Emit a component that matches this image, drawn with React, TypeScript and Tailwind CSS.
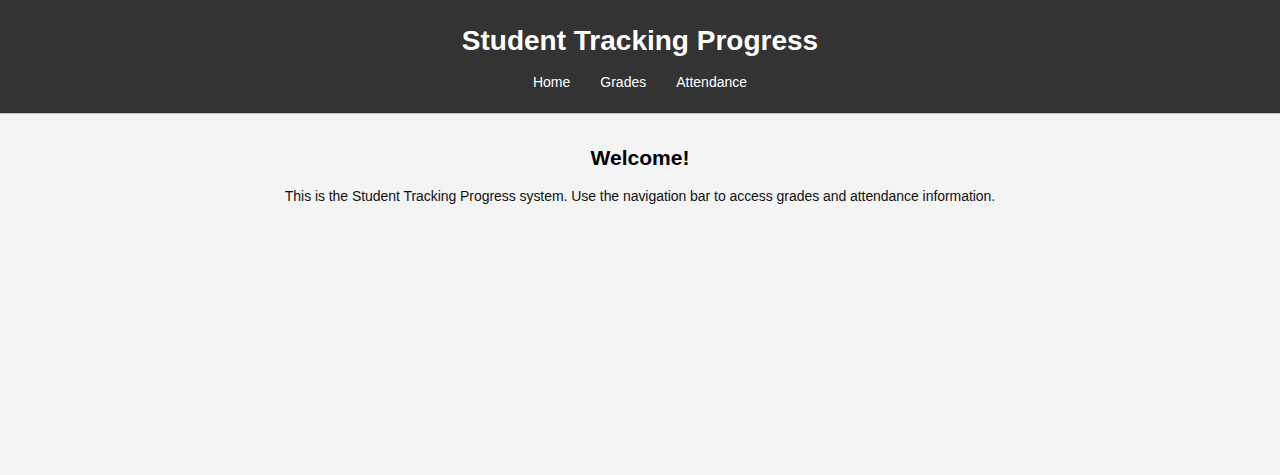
export default function App() {
  return (
    <div className="min-h-[475px] bg-[#f4f4f4] font-['Liberation_Sans',Arial,sans-serif] text-[14px] text-[#111]">
      {/* Header */}
      <header className="bg-[#333] text-white text-center pt-[25px] pb-[23px] border-b border-[#c4c4c4]">
        <h1 className="text-[28px] leading-[32px] font-bold m-0">Student Tracking Progress</h1>
        <nav className="mt-[17px] flex justify-center gap-[30px] leading-[16px] text-[14px]">
          <a href="#" className="text-white">Home</a>
          <a href="#" className="text-white">Grades</a>
          <a href="#" className="text-white">Attendance</a>
        </nav>
      </header>

      {/* Main content */}
      <main className="pt-[32px] text-center">
        <h2 className="text-[21px] leading-[24px] font-bold text-black">Welcome!</h2>
        <p className="mt-[18px] leading-[16px] tracking-[-0.05px]">
          This is the Student Tracking Progress system. Use the navigation bar to access grades and attendance information.
        </p>
      </main>
    </div>
  );
}
